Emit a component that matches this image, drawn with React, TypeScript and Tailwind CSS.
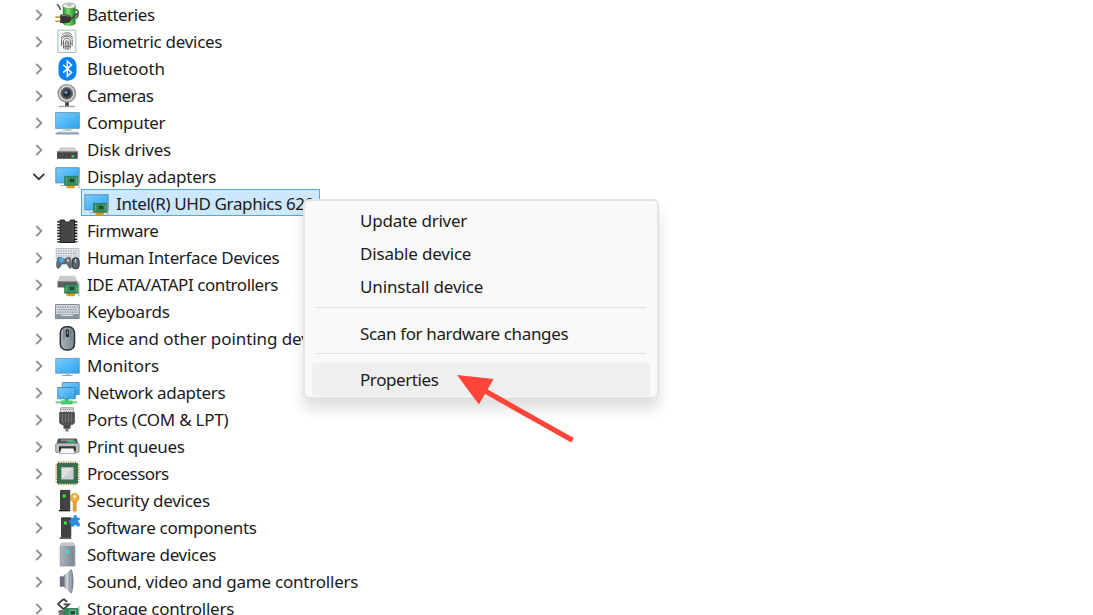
import React from 'react';

type IconProps = { children: React.ReactNode };

const Glyph: React.FC<IconProps> = ({ children }) => (
  <svg className="h-6 w-6 shrink-0 overflow-visible" viewBox="0 0 24 24" fill="none" aria-hidden="true">
    {children}
  </svg>
);

// Shared gradients, referenced by id from every icon
const Gradients = () => (
  <svg className="absolute h-0 w-0" aria-hidden="true">
    <defs>
      <linearGradient id="screen" x1="0" y1="0" x2="1" y2="1">
        <stop offset="0" stopColor="#7ccbf8" />
        <stop offset="0.5" stopColor="#54b8f6" />
        <stop offset="1" stopColor="#2ba2ee" />
      </linearGradient>
      <linearGradient id="steel" x1="0" y1="0" x2="1" y2="0">
        <stop offset="0" stopColor="#aab4bd" />
        <stop offset="1" stopColor="#7d868f" />
      </linearGradient>
      <linearGradient id="battery" x1="0" y1="0" x2="1" y2="0">
        <stop offset="0" stopColor="#238a2c" />
        <stop offset="0.4" stopColor="#7fe070" />
        <stop offset="1" stopColor="#1f7f2a" />
      </linearGradient>
      <linearGradient id="horn" x1="0" y1="0" x2="1" y2="0">
        <stop offset="0" stopColor="#68717c" />
        <stop offset="0.5" stopColor="#dadfe4" />
        <stop offset="1" stopColor="#7c8591" />
      </linearGradient>
    </defs>
  </svg>
);

const Card = () => (
  <>
    <path d="M11.5 20.5h8.500v3.700h-8.500z" fill="#eda51c" />
    <path d="M14.300 21.500v2.700M17.200 21.500v2.700" stroke="#b87912" strokeWidth="0.6" />
    <path d="M9.600 12.300h13.800v9H9.600z" fill="#338c5d" stroke="#1e6b43" strokeWidth="0.6" />
    <path d="M14.200 14.300h5.600v4.400h-5.600z" fill="#1d4c34" stroke="#5ea77c" strokeWidth="0.5" />
    <path d="M11.500 14v5.400M21.600 14v5.400" stroke="#7dc99a" strokeWidth="0.9" strokeDasharray="1.2 0.8" />
    <path d="M23.900 10v14.2" stroke="#a6abaf" strokeWidth="1.1" />
  </>
);

const BatteryIcon = () => (
  <Glyph>
    <path d="M2 2.2c1.5 1.2 2.7 3 3.5 5.8" stroke="#555" strokeWidth="1.5" />
    <path d="M20.3 8c4.500-.5 3.300 6 .4 8.500" stroke="#5d635d" strokeWidth="1.7" />
    <path d="M7.800 3.500h12.800v18c-2 3.200-10.800 3.200-12.800 0z" fill="url(#battery)" />
    <ellipse cx="14.2" cy="3.8" rx="6.4" ry="2.8" fill="#e9efe8" stroke="#87958a" strokeWidth="0.8" />
    <ellipse cx="14.2" cy="3" rx="2.9" ry="1.3" fill="#b7c1b7" />
    <path d="M.3 15.100h6M.3 19.200h6" stroke="#c09a3b" strokeWidth="1.6" />
    <path d="M5.200 12.400h6c3.500 0 5 2.200 5 4.300s-1.500 4.400-5 4.400h-6z" fill="#333" />
    <path d="M6.500 13.600h4.200c2 0 3 .8 3.500 1.500" stroke="#858585" />
    <path d="M15.500 17c4-.5 3.300-5.500 7.300-5" stroke="#444" strokeWidth="1.8" />
  </Glyph>
);

const FingerprintIcon = () => (
  <Glyph>
    <path d="M2.800 1.200h18v22.300h-18z" fill="#f8faf7" stroke="#a4bfb3" strokeWidth="1" />
    <g stroke="#5c5c5c" strokeWidth="0.900">
      <path d="M7.200 5.600c2.700-2.400 6.800-2.400 9.500 0" />
      <path d="M6 9c2.400-4 9.700-4.200 12 0M6.500 17V10.500c1-4 9.700-4 10.700 0V17" />
      <path d="M8.500 19.500V12c.6-3.600 6.200-3.600 6.800 0v7.500M10.300 20.600V13c.3-1.700 3-1.700 3.300 0v7.600M12 13v8" />
      <path d="M6.500 14h2M15.200 14.500h2M8.500 17.500h7" strokeWidth="0.6" />
    </g>
  </Glyph>
);

const BluetoothIcon = () => (
  <Glyph>
    <rect x="3.5" y="1" width="18" height="23.8" rx="8.5" fill="#0581fb" />
    <path d="M8.200 8.700l8.300 7.700-4.200 3.900V5l4.200 3.900-8.300 7.700" stroke="#fff" strokeWidth="1.5" />
  </Glyph>
);

const CameraIcon = () => (
  <Glyph>
    <path d="M12 19v4" stroke="#3c3c3c" strokeWidth="3.600" />
    <path d="M4 23.500h16" stroke="#a4a4a4" strokeWidth="1.4" />
    <circle cx="11.8" cy="10.3" r="8.7" fill="#d8d8d8" stroke="#8d8d8d" strokeWidth="1.4" />
    <circle cx="11.8" cy="10.3" r="5.9" fill="#4b5057" stroke="#777" />
    <circle cx="11.8" cy="10.3" r="3.4" fill="#222d3b" />
    <circle cx="11" cy="9.3" r="1.5" fill="#819db8" />
  </Glyph>
);

const ComputerIcon = () => (
  <Glyph>
    <path d="M.6 2.500h23.800v16H.6z" fill="url(#screen)" stroke="#4d8ab3" strokeWidth="0.7" />
    <path d="M.3 18.900h24.300v2.500H.3z" fill="#fff" />
    <path d="M10.500 18.800h4v1.500h-4z" fill="#b4c3ce" />
    <path d="M7.500 20.100h10" stroke="#9eb1bf" strokeWidth="0.9" />
    <path d="M2 21.700h21l1.300 2.500H.6z" fill="#a5b7c5" />
    <path d="M.6 24h23.700" stroke="#70889a" strokeWidth="0.7" />
  </Glyph>
);

const DiskIcon = () => (
  <Glyph>
    <path d="M5.500 10.300h14l3.200 4.700H2z" fill="#cfcfcf" />
    <path d="M2 14.600h20.700v7.200H2z" fill="#484848" />
    <path d="M2 15h20.700" stroke="#777" strokeWidth="0.8" />
    <path d="M16.500 18.300h2.800v2h-2.800z" fill="#39e443" />
  </Glyph>
);

const DisplayAdapterIcon = () => (
  <Glyph>
    <path d="M.8 3.700h23.400v15.200H.8z" fill="url(#screen)" stroke="#50839f" strokeWidth="0.8" />
    <path d="M5.500 21.500h5" stroke="#9eb1bf" strokeWidth="1.2" />
    <Card />
  </Glyph>
);

const FirmwareIcon = () => (
  <Glyph>
    <path d="M3.700 3v21.500M20.900 3v21.500" stroke="#262626" strokeWidth="3" strokeDasharray="1.6 1.3" />
    <path d="M5.200 2h4.200c.3 2.800 5.600 2.800 6 0h4.200v22.500H5.200z" fill="#454545" stroke="#202020" strokeWidth="1" />
    <path d="M7 6h10.500v16.500" stroke="#555" strokeWidth="0.7" />
  </Glyph>
);

const HidIcon = () => (
  <Glyph>
    <path d="M1.200 3.500h22.800v10H1.200z" fill="#e4e8eb" stroke="#a3acb4" strokeWidth="0.8" />
    <path d="M3 6h19.500M3 8.500h19.500M3 11h19.500" stroke="#89939c" strokeWidth="1.2" strokeDasharray="1.4 1.1" />
    <path d="M3 12.500h4l1.500 1.500h2L12 12.500h3c2 3 2.500 10.500.5 11-1.800.3-2.500-4-4-4.500H7.300c-1.500.5-2.200 4.800-4.300 4.500-2.500-.6-1.500-8 0-11z" fill="#626d78" stroke="#455059" strokeWidth="0.5" />
    <circle cx="6.500" cy="15.3" r="2.5" fill="#41a9f2" />
    <path d="M12 14.500h2v2h-2z" fill="#e0e3e7" />
    <path d="M13.500 15l1.600 1.600" stroke="#ef6c53" strokeWidth="1.3" />
    <rect x="17.3" y="12.8" width="6.8" height="11" rx="3" fill="#5d6874" stroke="#252b31" />
    <path d="M20.700 14v3.600" stroke="#e3e7eb" strokeWidth="1" />
  </Glyph>
);

const IdeIcon = () => (
  <Glyph>
    <path d="M5 3.800h15l2.500 5.500H2.500z" fill="#c9c9c9" />
    <path d="M2.500 9.200h20v6.300h-20z" fill="#606060" />
    <path d="M2.500 9.500h20" stroke="#949494" strokeWidth="0.8" />
    <Card />
  </Glyph>
);

const KeyboardIcon = () => (
  <Glyph>
    <path d="M.6 5.600h23.600v14H.6z" fill="#d9dde1" stroke="#79838c" strokeWidth="1" />
    <path d="M2.500 8.200h20M3.500 10.700h18M2.500 13.200h20" stroke="#75808a" strokeWidth="1.3" strokeDasharray="1.3 1.1" />
    <path d="M1.200 15h22.500v4.200H1.200z" fill="#89939d" />
    <path d="M6 16.300h12" stroke="#e4e8ea" strokeWidth="1.2" />
  </Glyph>
);

const MouseIcon = () => (
  <Glyph>
    <rect x="5.300" y=".7" width="14.2" height="23.3" rx="6" fill="url(#steel)" stroke="#2c3136" strokeWidth="1.5" />
    <path d="M9 3v10.500M15.800 3v10.500" stroke="#59636d" strokeWidth="0.7" />
    <rect x="10.7" y="3.3" width="3.4" height="8" rx="1.6" fill="#252b31" />
    <path d="M12.400 5v3" stroke="#a9bccb" strokeWidth="0.9" />
  </Glyph>
);

const MonitorIcon = () => (
  <Glyph>
    <path d="M.7 5.400h23.600v14.800H.7z" fill="url(#screen)" stroke="#4d8ab3" strokeWidth="0.7" />
    <path d="M10.500 20.600h4V22h-4z" fill="#b4c3ce" />
    <path d="M7.200 22.500h10.500" stroke="#859cab" strokeWidth="0.9" />
  </Glyph>
);

const NetworkIcon = () => (
  <Glyph>
    <path d="M7.300 2.500h16.900v12H7.300z" fill="url(#screen)" stroke="#397fae" strokeWidth="0.8" />
    <path d="M2.700 7.500h17.600v11.300H2.700z" fill="url(#screen)" stroke="#397fae" strokeWidth="0.8" />
    <path d="M9.800 19h3.800v2H9.800z" fill="#2dba4b" />
    <path d="M.3 22.300h22" stroke="#cfd7da" strokeWidth="3" />
    <path d="M6.200 20.600h11.200v3.700H6.200z" fill="#31c653" />
    <path d="M1 22.300h21" stroke="#58d873" strokeWidth="1.2" />
  </Glyph>
);

const PortIcon = () => (
  <Glyph>
    <path d="M5.800.8h12.500V6H5.800z" fill="#ececec" stroke="#777" strokeWidth="0.8" />
    <path d="M7.600 2.500h9.500M8.500 4.300h7.500" stroke="#7d7d7d" strokeWidth="1" strokeDasharray="1.2 1" />
    <path d="M4.600 5.600h14.800v10.200l-1.600 1.600H6.200l-1.600-1.600z" fill="#535353" stroke="#393939" strokeWidth="0.7" />
    <path d="M7.500 7.200v8.300M10.500 7.200v8.300M13.500 7.200v8.300M16.500 7.200v8.300" stroke="#7f7f7f" strokeWidth="0.8" />
    <path d="M8 17.500h8l-.8 4.200H8.800z" fill="#4a4a4a" />
    <path d="M12 21v3.500" stroke="#777" strokeWidth="3" />
  </Glyph>
);

const PrinterIcon = () => (
  <Glyph>
    <path d="M3.200 4.500h18.500l1.500 5H1.600z" fill="#4c565b" />
    <path d="M6 6.200h12.500" stroke="#91a0a8" strokeWidth="1.3" />
    <path d="M12 7.800h8.500" stroke="#27d862" strokeWidth="1.4" />
    <rect x=".6" y="9.2" width="23.5" height="9.4" rx="1.5" fill="#b9bdbf" stroke="#6f7375" strokeWidth="0.7" />
    <path d="M4 12.300h16.800v5.400H4z" fill="#303030" />
    <path d="M6.500 14.300h11.700l2 5.300H4.600z" fill="#f6f6f6" stroke="#888" strokeWidth="0.6" />
  </Glyph>
);

const ProcessorIcon = () => (
  <Glyph>
    <path d="M1.300 3.300v18M23.500 3.300v18M3.300 1.300h18.500M3.300 23.400h18.500" stroke="#b99745" strokeWidth="1.9" strokeDasharray="1.2 1.2" />
    <path d="M2.500 2.400h19.900v19.900H2.500z" fill="#38704f" stroke="#285c3f" strokeWidth="0.8" />
    <path d="M6.500 6.500h11.800v11.700H6.500z" fill="#dfe1e0" stroke="#b6bab8" strokeWidth="0.7" />
    <path d="M6.800 17.900L18 6.800v11.100z" fill="#cbcdcc" />
  </Glyph>
);

const SecurityIcon = () => (
  <Glyph>
    <path d="M5.500 2.400h9.300v19H5.500z" fill="#414141" stroke="#252525" strokeWidth="0.8" />
    <path d="M3.800 22.600h11.500" stroke="#262626" strokeWidth="1.5" />
    <path d="M7.700 6.500h3v3h-3z" fill="#36f035" />
    <path d="M18.200 13h3v9.200l-1.600 1.900-1.400-1.500z" fill="#e4a62c" stroke="#bd821d" strokeWidth="0.6" />
    <circle cx="19.7" cy="9.8" r="4.3" fill="#edb33c" stroke="#c48a22" strokeWidth="0.8" />
    <circle cx="19.7" cy="8.4" r="1.4" fill="#fff4d8" />
  </Glyph>
);

const SoftwareComponentIcon = () => (
  <Glyph>
    <path d="M6.500 2.800h9.300v18.700H6.500z" fill="#414141" stroke="#252525" strokeWidth="0.8" />
    <path d="M4.800 23h11.500" stroke="#262626" strokeWidth="1.5" />
    <path d="M8.800 6.500h3v3h-3z" fill="#36f035" />
    <path d="M15.700 2.800h3V.3h3v2.500h3V5h-1.400v2.500h1.400v4h-3v-1.300h-2.500v1.300h-3.500V8.500h-1.500V5.300h1.500z" fill="#2d89d9" />
  </Glyph>
);

const SoftwareDeviceIcon = () => (
  <Glyph>
    <path d="M7 1h11l1.800 3v20H5.200V4z" fill="url(#steel)" stroke="#838c94" strokeWidth="0.7" />
    <path d="M7 1h11l1.800 3H5.200z" fill="#c0c7cd" />
    <path d="M11 8.200h3v3h-3z" fill="#2de4f4" />
  </Glyph>
);

const SpeakerIcon = () => (
  <Glyph>
    <path d="M4.800 7.300h4.200v10.400H4.800z" fill="#66717d" />
    <path d="M8.500 6.800L15.500.8v23l-7-6z" fill="url(#horn)" />
    <path d="M15.300.5h1.500c2.300 6 2.300 17.700 0 23.700h-1.500z" fill="#7c8793" />
    <path d="M15.900 2v20.600" stroke="#c2c9d0" strokeWidth="0.7" />
  </Glyph>
);

const StorageIcon = () => (
  <Glyph>
    <path d="M8.600 3L3 8l5.600 5.200L14 8.400H8.600M8.600 3l3.600 3" stroke="#454545" strokeWidth="1.8" />
    <path d="M3 15.500c3-2.500 5-1.500 7.500 0L9 20H5z" fill="#707070" />
    <path d="M9.500 12.500h13.700v8.700H9.500z" fill="#338c5d" stroke="#1e6b43" strokeWidth="0.7" />
    <path d="M15 14.500h5.500v4.500H15z" fill="#204c35" stroke="#8ad2a6" strokeWidth="0.8" />
    <path d="M23.900 10v13" stroke="#a6abaf" strokeWidth="1.1" />
  </Glyph>
);

interface Label {
  name: string;
  tracking: string;
}

interface Device extends Label {
  icon: React.FC;
  children?: Label[];
}

const devices: Device[] = [
  { icon: BatteryIcon, name: 'Batteries', tracking: 'tracking-[-0.44px]' },
  { icon: FingerprintIcon, name: 'Biometric devices', tracking: 'tracking-[-0.28px]' },
  { icon: BluetoothIcon, name: 'Bluetooth', tracking: 'tracking-[-0.1px]' },
  { icon: CameraIcon, name: 'Cameras', tracking: 'tracking-[-0.55px]' },
  { icon: ComputerIcon, name: 'Computer', tracking: 'tracking-[-0.3px]' },
  { icon: DiskIcon, name: 'Disk drives', tracking: 'tracking-[-0.25px]' },
  {
    icon: DisplayAdapterIcon,
    name: 'Display adapters',
    tracking: 'tracking-[-0.26px]',
    children: [{ name: 'Intel(R) UHD Graphics 620', tracking: 'tracking-[-0.37px]' }],
  },
  { icon: FirmwareIcon, name: 'Firmware', tracking: 'tracking-[-0.5px]' },
  { icon: HidIcon, name: 'Human Interface Devices', tracking: 'tracking-[-0.36px]' },
  { icon: IdeIcon, name: 'IDE ATA/ATAPI controllers', tracking: 'tracking-[-0.44px]' },
  { icon: KeyboardIcon, name: 'Keyboards', tracking: 'tracking-[-0.14px]' },
  { icon: MouseIcon, name: 'Mice and other pointing devices', tracking: 'tracking-[-0.07px]' },
  { icon: MonitorIcon, name: 'Monitors', tracking: 'tracking-normal' },
  { icon: NetworkIcon, name: 'Network adapters', tracking: 'tracking-[-0.34px]' },
  { icon: PortIcon, name: 'Ports (COM & LPT)', tracking: 'tracking-[-0.25px]' },
  { icon: PrinterIcon, name: 'Print queues', tracking: 'tracking-[-0.33px]' },
  { icon: ProcessorIcon, name: 'Processors', tracking: 'tracking-[-0.5px]' },
  { icon: SecurityIcon, name: 'Security devices', tracking: 'tracking-[-0.25px]' },
  { icon: SoftwareComponentIcon, name: 'Software components', tracking: 'tracking-[-0.29px]' },
  { icon: SoftwareDeviceIcon, name: 'Software devices', tracking: 'tracking-[-0.3px]' },
  { icon: SpeakerIcon, name: 'Sound, video and game controllers', tracking: 'tracking-[-0.21px]' },
  { icon: StorageIcon, name: 'Storage controllers', tracking: 'tracking-[-0.26px]' },
];

const menuGroups: Label[][] = [
  [
    { name: 'Update driver', tracking: 'tracking-[-0.23px]' },
    { name: 'Disable device', tracking: 'tracking-[-0.18px]' },
    { name: 'Uninstall device', tracking: 'tracking-[-0.13px]' },
  ],
  [{ name: 'Scan for hardware changes', tracking: 'tracking-[-0.36px]' }],
  [{ name: 'Properties', tracking: 'tracking-[-0.42px]' }],
];

const Chevron: React.FC<{ open: boolean }> = ({ open }) => (
  <svg className="mt-[3px] h-4 w-4 shrink-0" viewBox="0 0 16 16" fill="none" aria-hidden="true">
    {open ? (
      <path d="M2.300 4.900l5.500 5.300 5.500-5.300" stroke="#383838" strokeWidth="1.8" />
    ) : (
      <path d="M5.300 3l5.100 5-5.100 5" stroke="#909090" strokeWidth="1.8" />
    )}
  </svg>
);

const DeviceRow: React.FC<{ device: Device }> = ({ device }) => {
  const Icon = device.icon;
  return (
    <li>
      <div className="flex h-[27px] items-center pl-[31px]">
        <Chevron open={!!device.children} />
        <span className="ml-2 flex">
          <Icon />
        </span>
        <span className={`ml-2 pt-0.5 ${device.tracking}`}>{device.name}</span>
      </div>
      {device.children?.map((child) => (
        <div
          key={child.name}
          className="ml-[81px] flex h-[27px] w-[239px] items-center border border-[#55a5e2] bg-[#cce8ff] pl-0.5"
        >
          <Icon />
          <span className={`ml-2 pt-0.5 ${child.tracking}`}>{child.name}</span>
        </div>
      ))}
    </li>
  );
};

const ContextMenu = () => (
  <div
    role="menu"
    className="absolute left-[303px] top-[199px] h-[200px] w-[356px] rounded-md border-2 border-[#e3e3e3] bg-[#f9f9f9] pt-[3px] pr-[7px] pl-[7px] shadow-[0_10px_14px_rgba(0,0,0,0.13)]"
  >
    {menuGroups.map((group, index) => (
      <div
        key={group[0].name}
        className={
          index > 0
            ? 'relative mt-[3px] pt-[10px] before:absolute before:left-1 before:right-1 before:top-0 before:h-px before:bg-[#dedede]'
            : 'pb-px'
        }
      >
        {group.map((item) => (
          <div
            key={item.name}
            role="menuitem"
            className={`flex h-[33px] items-center rounded pl-12 ${item.tracking} ${item.name === 'Properties' ? 'bg-[#efefef]' : ''}`}
          >
            {item.name}
          </div>
        ))}
      </div>
    ))}
  </div>
);

const App: React.FC = () => (
  <main className="relative h-[615px] w-[1093px] overflow-hidden bg-white font-['Noto_Sans',sans-serif] text-[17px] leading-[27px] whitespace-nowrap text-[#1b1b1b]">
    <Gradients />
    <ul>
      {devices.map((device) => (
        <DeviceRow key={device.name} device={device} />
      ))}
    </ul>
    <ContextMenu />
    {/* Pointer arrow */}
    <svg className="absolute left-[450px] top-[370px] h-20 w-32" viewBox="0 0 128 80" aria-hidden="true">
      <path d="M36 21.500l86.500 48.800" stroke="#ff4438" strokeWidth="5.2" />
      <path d="M7 5l36.600 4-14.700 25.600z" fill="#ff4438" />
    </svg>
  </main>
);

export default App;
